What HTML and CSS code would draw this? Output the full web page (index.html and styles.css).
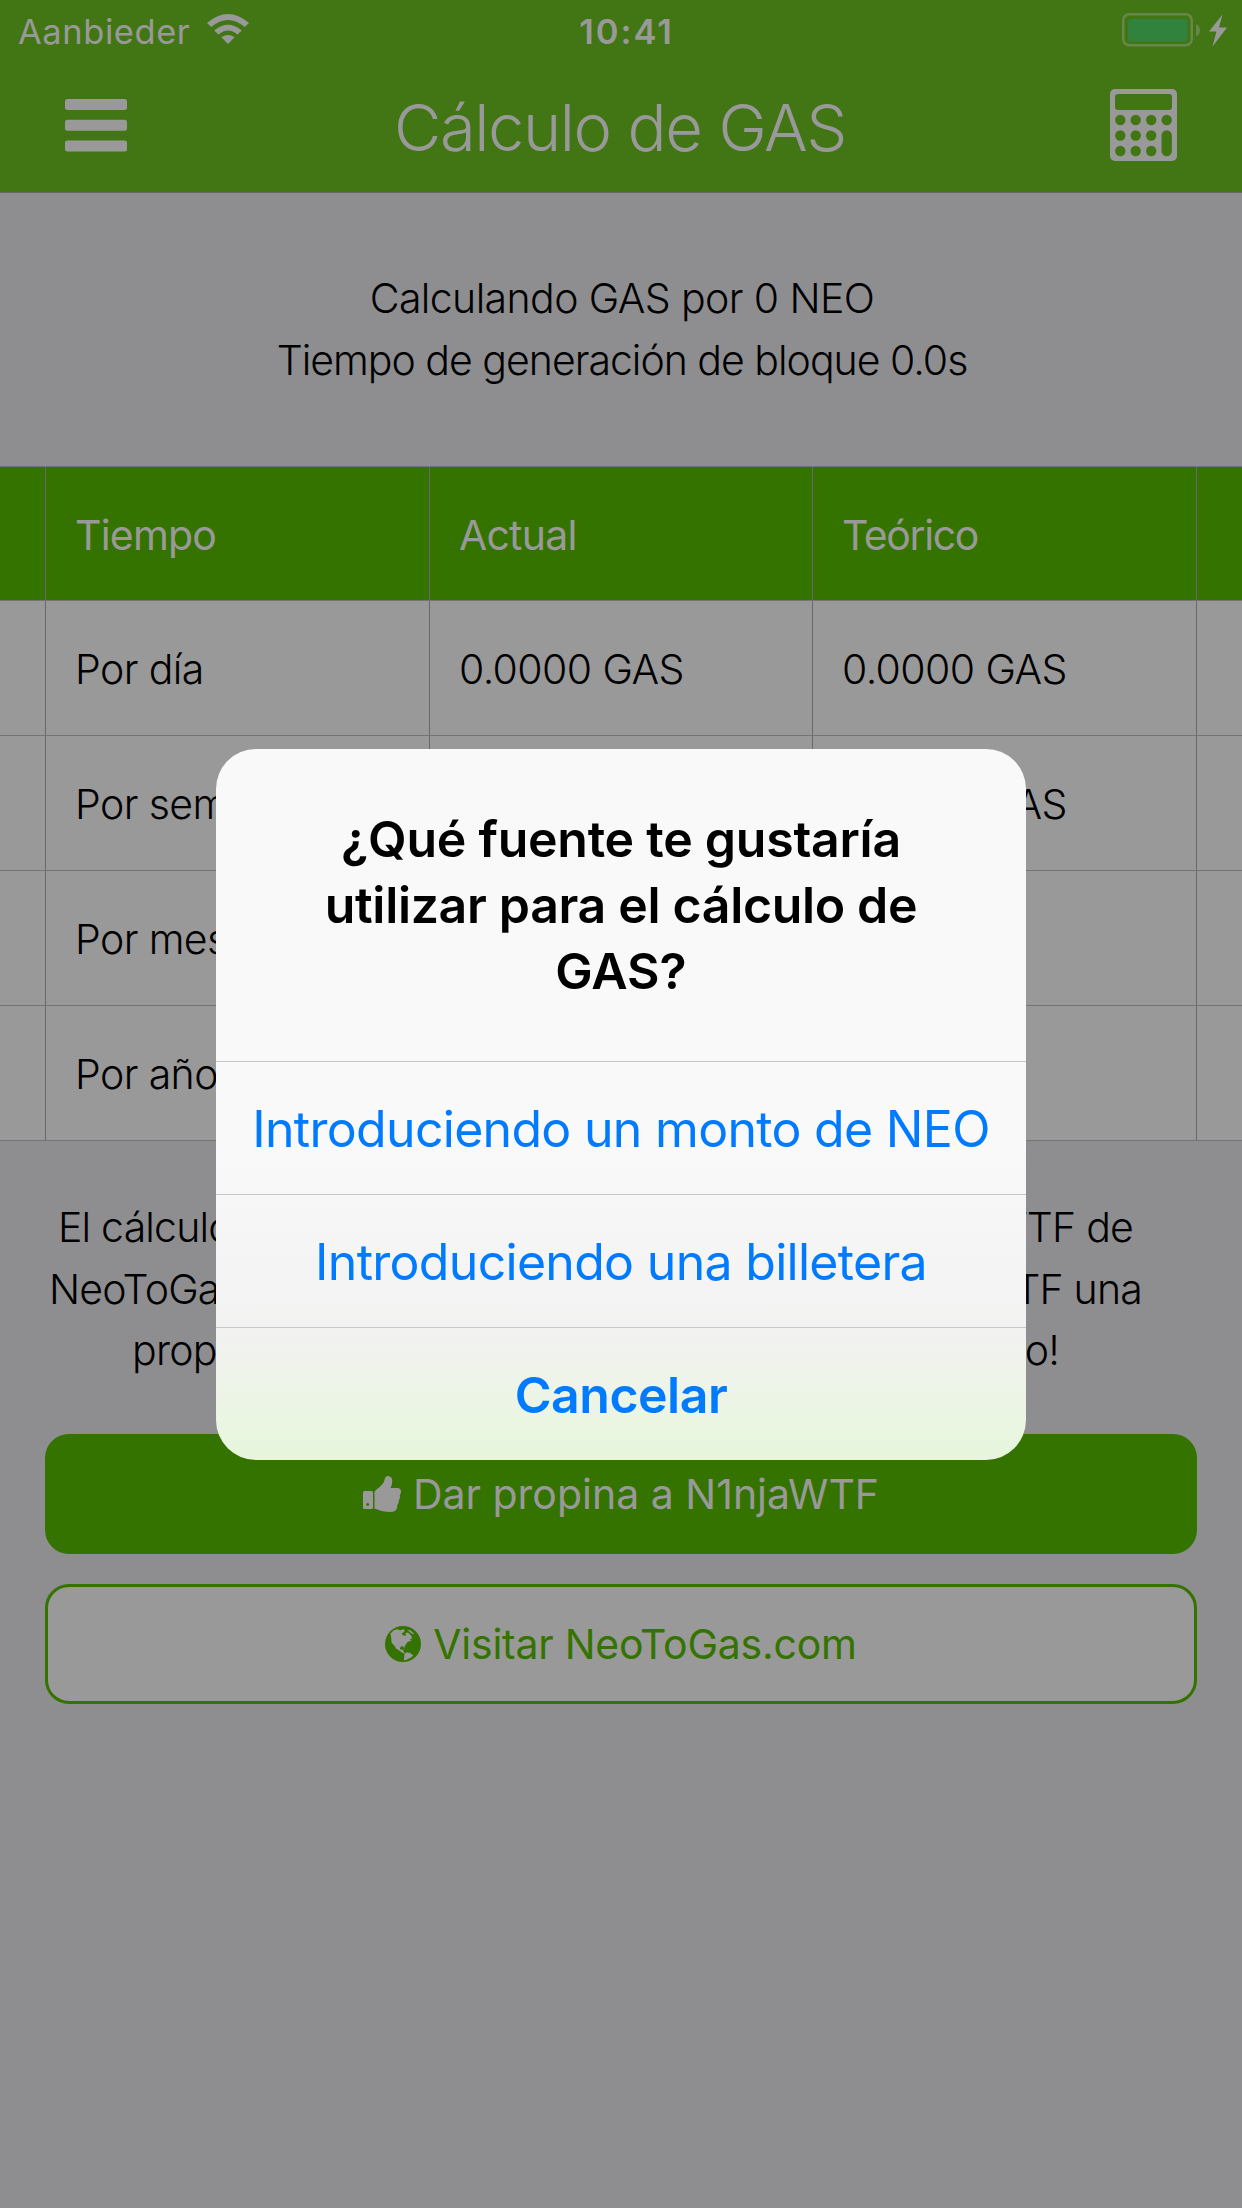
FILE: index.html
```html
<!DOCTYPE html>
<html lang="es">
<head>
<meta charset="utf-8">
<title>Cálculo de GAS</title>
<link rel="stylesheet" href="styles.css">
</head>
<body>
<div class="screen">
  <header class="header">
    <div class="status">
      <div class="carrier"><span class="carrier-name">Aanbieder</span>
        <svg class="wifi" viewBox="0 0 42 30" width="42" height="30"><path d="M0 9Q21-9 42 9L37.800 13Q21-1 4.200 13Z"/><path d="M7.200 16.500Q21 5 34.800 16.500L30.500 20.500Q21 12.500 11.500 20.500Z"/><path d="M14.500 23.300Q21 18.500 27.500 23.300L21 30Z"/></svg>
      </div>
      <span class="clock">10:41</span>
      <svg class="battery" viewBox="0 0 106 34" width="106" height="34"><rect x="1.250" y="1.250" width="68.500" height="31" rx="6" fill="none" stroke="#67874a" stroke-width="2.500"/><rect x="6" y="6" width="59.500" height="22.500" rx="3" fill="#30823c"/><path d="M74 11q4 2 4 6.250t-4 6.250z" fill="#67874a"/><path d="M100.500 1.500L87 18.500h7.500L90.500 33.500L105 14.500h-8z" fill="#999"/></svg>
    </div>
    <div class="navbar">
      <svg class="menu" viewBox="0 0 62 53" width="62" height="53"><rect width="62" height="11" rx="2.500"/><rect y="20.700" width="62" height="11" rx="2.500"/><rect y="41.400" width="62" height="11" rx="2.500"/></svg>
      <h1 class="title">Cálculo de GAS</h1>
      <svg class="calc" viewBox="0 0 67 72" width="67" height="72"><rect width="67" height="72" rx="5"/><g fill="#427615"><rect x="5" y="5" width="57" height="16" rx="3"/><circle cx="10.300" cy="31" r="5.200"/><circle cx="25.700" cy="31" r="5.200"/><circle cx="41.200" cy="31" r="5.200"/><circle cx="56.700" cy="31" r="5.200"/><circle cx="10.300" cy="46.500" r="5.200"/><circle cx="25.700" cy="46.500" r="5.200"/><circle cx="41.200" cy="46.500" r="5.200"/><circle cx="10.300" cy="62" r="5.200"/><circle cx="25.700" cy="62" r="5.200"/><circle cx="41.200" cy="62" r="5.200"/><rect x="51.500" y="41.300" width="10.400" height="26" rx="5.200"/></g></svg>
    </div>
  </header>
  <div class="summary"><div><span class="s1">Calculando GAS por 0 NEO</span></div><div><span class="s2">Tiempo de generación de bloque 0.0s</span></div></div>
  <div class="table">
    <div class="row head"><i></i><span>Tiempo</span><span>Actual</span><span class="tight">Teórico</span><i></i></div>
    <div class="row"><i></i><span>Por día</span><span>0.0000 GAS</span><span>0.0000 GAS</span><i></i></div>
    <div class="row"><i></i><span>Por sem</span><span></span><span>0.0000 GAS</span><i></i></div>
    <div class="row"><i></i><span>Por mes</span><span></span><span></span><i></i></div>
    <div class="row"><i></i><span>Por año</span><span></span><span></span><i></i></div>
  </div>
  <div class="credits">
    <div class="line l1"><span>El cálculo</span><span>WTF de</span></div>
    <div class="line l2"><span>NeoToGa</span><span>TF una</span></div>
    <div class="line l3"><span>prop</span><span>o!</span></div>
  </div>
  <div class="btn solid"><svg class="thumb" viewBox="0 0 38 36" width="38" height="36"><path fill-rule="evenodd" d="M1.500 15H8.500q1.500 0 1.500 1.500V31.500Q10 33 8.500 33H1.500Q0 33 0 31.500V16.500Q0 15 1.500 15ZM4.700 27a1.500 1.500 0 1 0 .01 0Z"/><path d="M11.500 16.500Q11.500 15 13.500 13.500Q17 11 20 7.500Q21.500 5 22 2Q22.700 0 25 0Q29.300 .500 29.300 5Q29.300 8.500 27.500 12H35Q38 12.500 38 15.500Q38 18 36.700 19Q37.700 22 35.800 24.300Q36.200 27.500 34.300 29Q34.500 32 33 34Q31.500 36 27.500 36Q20 36 11.500 32.500Z"/></svg><span>Dar propina a N1njaWTF</span></div>
  <div class="btn outline"><svg class="globe" viewBox="0 0 36 36" width="36" height="36"><circle cx="18" cy="18" r="18" fill="#357300"/><g fill="#999"><path d="M5.500 7.500L8.500 4.500L12 3.300L15 4.300L18 3.300L20 4.500L18.500 6.500L16.500 7.500L18 9.200L20.500 10L20.800 7L23 6.500L26 9.500L27.300 12.500L24.500 13L26.500 14.500L22.500 16L20.500 19L19.500 20.500V22.500L18 20.300L15.500 20.700L15 23L17 24L18.500 23.300L18.300 25.500L20 27L18 27.200L14.500 24.800L11 22.500L9.200 19.500L6.500 16.500L6.300 12Z"/><path d="M19.500 27.500L22 26.300L25 27L28.300 29.500L26 31.500L21 34L18.800 34.300L19.200 31Z"/><path d="M22 3.800L25.500 4.500L29.500 8L27 7.800Z"/></g></svg><span class="visit">Visitar NeoToGas.com</span></div>
</div>
<div class="alert">
  <div class="question"><div><span class="q1">¿Qué fuente te gustaría</span></div><div><span class="q2">utilizar para el cálculo de</span></div><div><span>GAS?</span></div></div>
  <div class="action">Introduciendo un monto de NEO</div>
  <div class="action">Introduciendo una billetera</div>
  <div class="action cancel">Cancelar</div>
</div>
</body>
</html>
```
FILE: styles.css
```css
* { box-sizing: border-box; }
body { margin: 0; font-family: Inter, "Liberation Sans", sans-serif; color: #000; font-size: 41px; }
.screen { width: 1242px; height: 2208px; background: #8e8e91; font-weight: 300; display: flex; flex-direction: column; overflow: hidden; }
.header { height: 193px; background: #427615; color: #999; border-bottom: 1px solid #69696b; }
.header svg { fill: #999; display: block; }
.status { height: 60px; display: grid; grid-template-columns: 1fr auto 1fr; align-items: center; padding: 2px 14px 0 18px; font-size: 34.5px; font-weight: 400; }
.carrier { display: flex; gap: 17px; }
.carrier-name { line-height: 35px; letter-spacing: .55px; }
.clock { font-weight: 600; letter-spacing: 1.9px; margin-left: 7px; }
.battery { justify-self: end; margin-top: -2px; }
.navbar { height: 132px; display: flex; justify-content: space-between; padding: 0 65px; }
.menu { margin-top: 39px; }
.calc { margin-top: 29px; }
.title { margin: 28px 0 0 3px; font-size: 65px; font-weight: 300; line-height: 80px; letter-spacing: -1.4px; }
.summary { height: 273px; padding: 74px 0 0 2px; text-align: center; line-height: 62px; }
.s1 { letter-spacing: -.6px; }
.s2 { letter-spacing: -1px; }
.table { display: flex; flex-direction: column; border-top: 1px solid #727274; letter-spacing: -.6px; }
.row { height: 135px; display: grid; grid-template-columns: 45px 384px 383px 384px 1fr; grid-template-rows: 100%; background: #999; border-bottom: 1px solid #747476; }
.row.head { height: 134px; background: #357300; color: #999; font-weight: 400; letter-spacing: -.8px; }
.row span { border-left: 1px solid #69696b; padding-left: 29px; line-height: 136px; white-space: nowrap; }
.row .tight { letter-spacing: -1.4px; }
.row i:last-child { border-left: 1px solid #69696b; }
.credits { height: 293px; padding-top: 56px; display: flex; flex-direction: column; align-items: center; line-height: 61.5px; letter-spacing: -.8px; }
.line { display: flex; justify-content: space-between; margin-right: 51px; }
.l1 { width: 1075px; }
.l2 { width: 1093px; }
.l3 { width: 927px; }
.btn { height: 120px; margin: 0 45px 30px; border-radius: 24px; display: flex; align-items: center; justify-content: center; gap: 12px; font-weight: 400; }
.solid { background: #357300; color: #999; fill: #999; }
.outline { background: #999; border: 3px solid #357300; color: #357300; }
.visit { letter-spacing: -.25px; }
.alert { position: absolute; left: 216px; top: 749px; width: 810px; height: 711px; border-radius: 40px; overflow: hidden; background: linear-gradient(#f9f9f9 0, #f9f9f9 400px, #f4f4f4 530px, #f1f2f0 590px, #e9f6e0 685px, #e8f5dc 711px); text-align: center; font-size: 50px; }
.question { height: 312px; padding-top: 57px; font-weight: 600; line-height: 66px; }
.q1 { letter-spacing: -.25px; }
.q2 { letter-spacing: -.33px; }
.action { height: 133px; border-top: 1px solid #c6c7ca; color: #007aff; line-height: 134px; letter-spacing: -.7px; }
.cancel { font-weight: 600; letter-spacing: -.5px; }
```
